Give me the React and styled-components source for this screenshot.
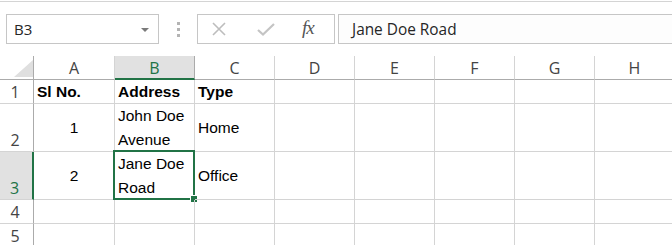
import React from 'react';
import styled, { createGlobalStyle } from 'styled-components';

const GlobalStyle = createGlobalStyle`
    html, body { margin: 0; padding: 0; background: #ffffff; }
    body { width: 672px; height: 245px; overflow: hidden; }
`;

const Sheet = styled.div`
    width: 672px;
    height: 245px;
    overflow: hidden;
    background: #ffffff;
    border-top: 1px solid #d4d4d4;
    margin-top: 1px;
    font-family: 'Open Sans', 'Liberation Sans', sans-serif;
`;

const FormulaRow = styled.div`
    display: flex;
    align-items: center;
    height: 30px;
    margin-top: 12px;
    padding-left: 6px;
`;

const NameBox = styled.div`
    box-sizing: border-box;
    width: 153px;
    height: 30px;
    border: 1px solid #c6c6c6;
    display: flex;
    align-items: center;
    justify-content: space-between;
    padding: 0 9px 0 7px;
    font-size: 15px;
    color: #262626;
`;

const Caret = styled.span`
    width: 0;
    height: 0;
    border-left: 4px solid transparent;
    border-right: 4px solid transparent;
    border-top: 4px solid #7a7a7a;
    margin-top: 2px;
`;

const Grip = styled.div`
    width: 38px;
    display: flex;
    flex-direction: column;
    align-items: center;
    gap: 3px;
    span {
        width: 3px;
        height: 3px;
        background: #b4b4b4;
    }
`;

const ButtonGroup = styled.div`
    box-sizing: border-box;
    width: 138px;
    height: 30px;
    border: 1px solid #c6c6c6;
    display: flex;
    align-items: center;
    padding-left: 14px;
`;

const IconSlot = styled.div`
    width: ${p => p.w}px;
    display: flex;
    align-items: center;
`;

const Fx = styled.span`
    font-family: 'Liberation Serif', serif;
    font-style: italic;
    font-size: 19px;
    color: #555555;
    letter-spacing: -1px;
    margin-top: -2px;
`;

const FormulaInput = styled.div`
    box-sizing: border-box;
    flex: 1;
    height: 30px;
    margin-left: 3px;
    margin-right: -4px;
    border: 1px solid #c6c6c6;
    background: #fdfdfd;
    display: flex;
    align-items: center;
    padding-left: 13px;
    font-size: 15.4px;
    color: #262626;
`;

const Grid = styled.div`
    display: grid;
    grid-template-columns: 34px 81px repeat(7, 80px);
    grid-template-rows: 24px 24px 48px 48px 24px 24px;
    margin-top: 12px;
`;

const Corner = styled.div`
    position: relative;
    border-right: 1px solid #ababab;
    border-bottom: 1px solid #ababab;
    &::after {
        content: '';
        position: absolute;
        right: 0;
        bottom: 2px;
        width: 0;
        height: 0;
        border-left: 19px solid transparent;
        border-bottom: 17px solid #dfdfdf;
    }
`;

const ColHead = styled.div`
    box-sizing: border-box;
    display: flex;
    align-items: center;
    justify-content: center;
    font-size: 16px;
    color: ${p => (p.active ? '#217346' : '#444444')};
    background: ${p => (p.active ? '#e1e1e1' : '#ffffff')};
    border-right: 1px solid ${p => (p.active ? '#ababab' : '#d4d4d4')};
    border-bottom: ${p => (p.active ? '2px solid #217346' : '1px solid #ababab')};
    padding-top: 1px;
`;

const RowHead = styled.div`
    box-sizing: border-box;
    display: flex;
    align-items: flex-end;
    justify-content: center;
    padding-right: 3px;
    font-size: 16px;
    line-height: 22px;
    color: ${p => (p.active ? '#217346' : '#444444')};
    background: ${p => (p.active ? '#e1e1e1' : '#ffffff')};
    border-right: ${p => (p.active ? '2px solid #217346' : '1px solid #ababab')};
    border-bottom: 1px solid #d4d4d4;
`;

const Cell = styled.div`
    position: relative;
    box-sizing: border-box;
    display: flex;
    align-items: center;
    justify-content: ${p => (p.center ? 'center' : 'flex-start')};
    padding: 0 3px;
    font-family: 'Liberation Sans', Arial, sans-serif;
    font-size: 15.5px;
    line-height: 23.5px;
    font-weight: ${p => (p.bold ? 700 : 400)};
    color: #000000;
    border-right: 1px solid #d4d4d4;
    border-bottom: 1px solid #d4d4d4;
    white-space: pre-line;
`;

const Selection = styled.div`
    position: absolute;
    left: -2px;
    top: -2px;
    right: -1px;
    bottom: -1px;
    border: 2px solid #217346;
    pointer-events: none;
`;

const FillHandle = styled.div`
    position: absolute;
    right: -4px;
    bottom: -4px;
    width: 6px;
    height: 6px;
    background: #217346;
    box-shadow: 0 0 0 1px #ffffff;
`;

const columns = ['A', 'B', 'C', 'D', 'E', 'F', 'G', 'H'];

const rows = [
    { n: 1, cells: [{ t: 'Sl No.', bold: true }, { t: 'Address', bold: true }, { t: 'Type', bold: true }] },
    { n: 2, cells: [{ t: '1', center: true }, { t: 'John Doe\nAvenue' }, { t: 'Home' }] },
    { n: 3, active: true, cells: [{ t: '2', center: true }, { t: 'Jane Doe\nRoad', selected: true }, { t: 'Office' }] },
    { n: 4, cells: [] },
    { n: 5, cells: [] },
];

const CancelIcon = () => (
    <svg width="14" height="14" viewBox="0 0 14 14">
        <path d="M1 1 L13 13 M13 1 L1 13" stroke="#bdbdbd" strokeWidth="1.6" fill="none" />
    </svg>
);

const EnterIcon = () => (
    <svg width="18" height="13" viewBox="0 0 18 13">
        <path d="M1 7 L6 11.5 L17 1" stroke="#c4c4c4" strokeWidth="2.2" fill="none" />
    </svg>
);

function App() {
    return (
        <Sheet>
            <GlobalStyle />
            <FormulaRow>
                <NameBox>
                    <span>B3</span>
                    <Caret />
                </NameBox>
                <Grip>
                    <span /><span /><span />
                </Grip>
                <ButtonGroup>
                    <IconSlot w={45}><CancelIcon /></IconSlot>
                    <IconSlot w={45}><EnterIcon /></IconSlot>
                    <IconSlot w={24}><Fx>fx</Fx></IconSlot>
                </ButtonGroup>
                <FormulaInput>Jane Doe Road</FormulaInput>
            </FormulaRow>
            <Grid>
                <Corner />
                {columns.map(c => (
                    <ColHead key={c} active={c === 'B'}>{c}</ColHead>
                ))}
                {rows.map(r => (
                    <React.Fragment key={r.n}>
                        <RowHead active={r.active}>{r.n}</RowHead>
                        {columns.map((c, i) => {
                            const cell = r.cells[i] || {};
                            return (
                                <Cell key={c} bold={cell.bold} center={cell.center}>
                                    {cell.t}
                                    {cell.selected && (
                                        <Selection>
                                            <FillHandle />
                                        </Selection>
                                    )}
                                </Cell>
                            );
                        })}
                    </React.Fragment>
                ))}
            </Grid>
        </Sheet>
    );
}

export default App;
